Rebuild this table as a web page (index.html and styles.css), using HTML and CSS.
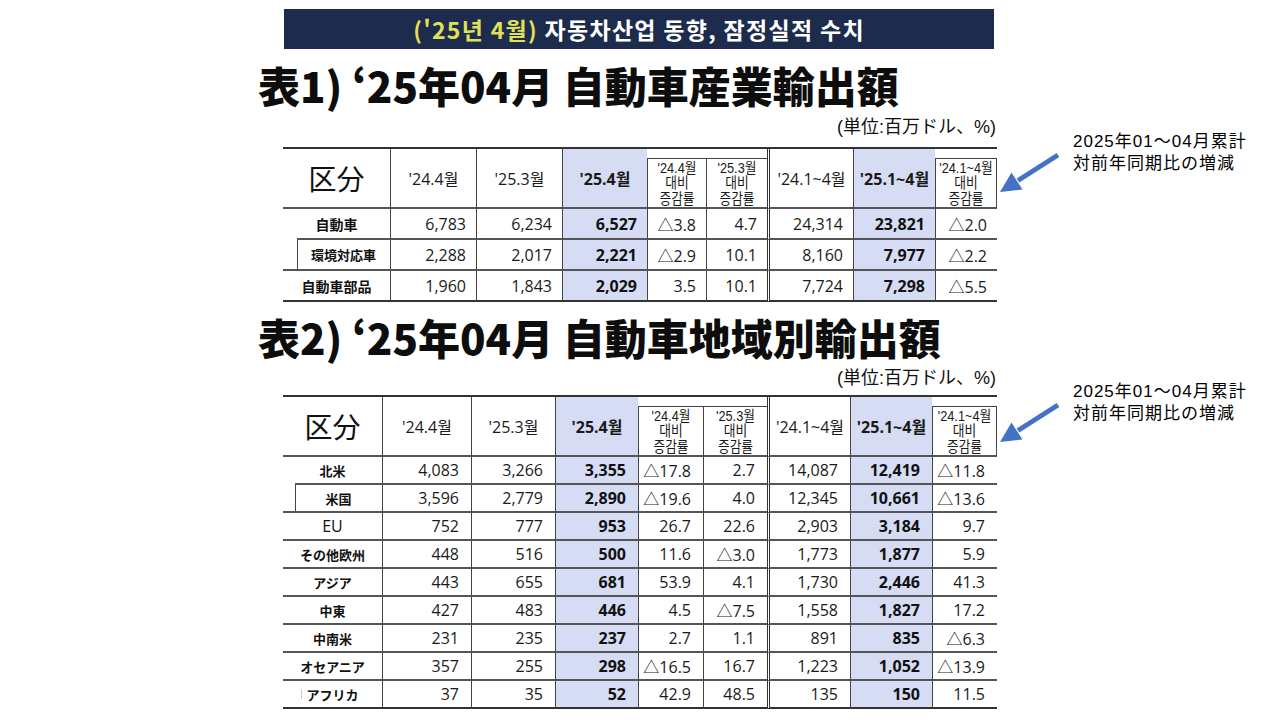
FILE: index.html
```html
<!DOCTYPE html>
<html lang="ja">
<head>
<meta charset="utf-8">
<title>'25年04月 自動車輸出額</title>
<link rel="stylesheet" href="styles.css">
</head>
<body>
<div class="page">
  <main class="main">
    <div class="banner"><span class="yl">('25년 4월)</span>&nbsp;자동차산업 동향, 잠정실적 수치</div>

    <section class="sec sec1">
      <h2 class="title">表1) ‘25年04月 自動車産業輸出額</h2>
      <p class="unit">(単位:百万ドル、%)</p>
      <table class="tbl t1">
        <colgroup><col><col><col><col><col><col><col><col><col></colgroup>
        <thead>
          <tr class="hr1">
            <th rowspan="2" class="c0 kubun">区分</th>
            <th rowspan="2">'24.4월</th>
            <th rowspan="2">'25.3월</th>
            <th rowspan="2" class="hl">'25.4월</th>
            <th colspan="2" class="grp"></th>
            <th rowspan="2" class="dbl">'24.1~4월</th>
            <th rowspan="2" class="hl">'25.1~4월</th>
            <th class="grp"></th>
          </tr>
          <tr class="hr2">
            <th class="sub"><div class="stack"><span class="ln">'24.4월</span><span class="ln">대비</span><span class="ln">증감률</span></div></th>
            <th class="sub"><div class="stack"><span class="ln">'25.3월</span><span class="ln">대비</span><span class="ln">증감률</span></div></th>
            <th class="sub lastsub"><div class="stack"><span class="ln">'24.1~4월</span><span class="ln">대비</span><span class="ln">증감률</span></div></th>
          </tr>
        </thead>
        <tbody>
          <tr>
            <td class="c0 lbl above-indent">自動車</td>
            <td>6,783</td><td>6,234</td><td class="hl">6,527</td><td>△3.8</td><td>4.7</td>
            <td class="dbl">24,314</td><td class="hl">23,821</td><td>△2.0</td>
          </tr>
          <tr>
            <td class="c0 lbl indent small">環境対応車</td>
            <td>2,288</td><td>2,017</td><td class="hl">2,221</td><td>△2.9</td><td>10.1</td>
            <td class="dbl">8,160</td><td class="hl">7,977</td><td>△2.2</td>
          </tr>
          <tr class="last">
            <td class="c0 lbl">自動車部品</td>
            <td>1,960</td><td>1,843</td><td class="hl">2,029</td><td>3.5</td><td>10.1</td>
            <td class="dbl">7,724</td><td class="hl">7,298</td><td>△5.5</td>
          </tr>
        </tbody>
      </table>
      <aside class="note">
        <svg class="arrow" viewBox="0 0 64 44" width="64" height="44" aria-hidden="true">
          <line x1="60" y1="4" x2="20" y2="29.5" stroke="#4472c4" stroke-width="5"/>
          <polygon points="2,41 24.5,38.6 13.5,21.6" fill="#4472c4"/>
        </svg>
        <div class="note-text">2025年01～04月累計<br>対前年同期比の増減</div>
      </aside>
    </section>

    <section class="sec sec2">
      <h2 class="title">表2) ‘25年04月 自動車地域別輸出額</h2>
      <p class="unit">(単位:百万ドル、%)</p>
      <table class="tbl t2">
        <colgroup><col><col><col><col><col><col><col><col><col></colgroup>
        <thead>
          <tr class="hr1">
            <th rowspan="2" class="c0 kubun">区分</th>
            <th rowspan="2">'24.4월</th>
            <th rowspan="2">'25.3월</th>
            <th rowspan="2" class="hl">'25.4월</th>
            <th colspan="2" class="grp"></th>
            <th rowspan="2" class="dbl">'24.1~4월</th>
            <th rowspan="2" class="hl">'25.1~4월</th>
            <th class="grp"></th>
          </tr>
          <tr class="hr2">
            <th class="sub"><div class="stack"><span class="ln">'24.4월</span><span class="ln">대비</span><span class="ln">증감률</span></div></th>
            <th class="sub"><div class="stack"><span class="ln">'25.3월</span><span class="ln">대비</span><span class="ln">증감률</span></div></th>
            <th class="sub lastsub"><div class="stack"><span class="ln">'24.1~4월</span><span class="ln">대비</span><span class="ln">증감률</span></div></th>
          </tr>
        </thead>
        <tbody>
          <tr>
            <td class="c0 lbl above-indent">北米</td>
            <td>4,083</td><td>3,266</td><td class="hl">3,355</td><td>△17.8</td><td>2.7</td>
            <td class="dbl">14,087</td><td class="hl">12,419</td><td>△11.8</td>
          </tr>
          <tr>
            <td class="c0 lbl indent">米国</td>
            <td>3,596</td><td>2,779</td><td class="hl">2,890</td><td>△19.6</td><td>4.0</td>
            <td class="dbl">12,345</td><td class="hl">10,661</td><td>△13.6</td>
          </tr>
          <tr>
            <td class="c0 lbl latin">EU</td>
            <td>752</td><td>777</td><td class="hl">953</td><td>26.7</td><td>22.6</td>
            <td class="dbl">2,903</td><td class="hl">3,184</td><td>9.7</td>
          </tr>
          <tr>
            <td class="c0 lbl">その他欧州</td>
            <td>448</td><td>516</td><td class="hl">500</td><td>11.6</td><td>△3.0</td>
            <td class="dbl">1,773</td><td class="hl">1,877</td><td>5.9</td>
          </tr>
          <tr>
            <td class="c0 lbl">アジア</td>
            <td>443</td><td>655</td><td class="hl">681</td><td>53.9</td><td>4.1</td>
            <td class="dbl">1,730</td><td class="hl">2,446</td><td>41.3</td>
          </tr>
          <tr>
            <td class="c0 lbl">中東</td>
            <td>427</td><td>483</td><td class="hl">446</td><td>4.5</td><td>△7.5</td>
            <td class="dbl">1,558</td><td class="hl">1,827</td><td>17.2</td>
          </tr>
          <tr>
            <td class="c0 lbl">中南米</td>
            <td>231</td><td>235</td><td class="hl">237</td><td>2.7</td><td>1.1</td>
            <td class="dbl">891</td><td class="hl">835</td><td>△6.3</td>
          </tr>
          <tr>
            <td class="c0 lbl">オセアニア</td>
            <td>357</td><td>255</td><td class="hl">298</td><td>△16.5</td><td>16.7</td>
            <td class="dbl">1,223</td><td class="hl">1,052</td><td>△13.9</td>
          </tr>
          <tr class="last">
            <td class="c0 lbl tick">アフリカ</td>
            <td>37</td><td>35</td><td class="hl">52</td><td>42.9</td><td>48.5</td>
            <td class="dbl">135</td><td class="hl">150</td><td>11.5</td>
          </tr>
        </tbody>
      </table>
      <aside class="note">
        <svg class="arrow" viewBox="0 0 64 44" width="64" height="44" aria-hidden="true">
          <line x1="60" y1="4" x2="20" y2="29.5" stroke="#4472c4" stroke-width="5"/>
          <polygon points="2,41 24.5,38.6 13.5,21.6" fill="#4472c4"/>
        </svg>
        <div class="note-text">2025年01～04月累計<br>対前年同期比の増減</div>
      </aside>
    </section>
  </main>
</div>
</body>
</html>
```

FILE: styles.css
```css
* { box-sizing: border-box; }

html, body {
  margin: 0;
  padding: 0;
  background: #ffffff;
}

body {
  font-family: "Noto Sans CJK JP", "Noto Sans CJK KR", sans-serif;
  color: #111111;
}

.page {
  width: 1280px;
  height: 720px;
  overflow: hidden;
}

.main {
  margin-left: 258px;
  padding-top: 9px;
}

/* ---------- banner ---------- */
.banner {
  margin-left: 26px;
  width: 710px;
  height: 40px;
  background: #1d2b4c;
  display: flex;
  align-items: center;
  justify-content: center;
  font-family: "Noto Sans CJK KR", sans-serif;
  font-weight: 700;
  font-size: 23px;
  letter-spacing: 1.3px;
  color: #ffffff;
}

.banner .yl { color: #e0e05a; }

/* ---------- sections ---------- */
.sec {
  display: grid;
  grid-template-columns: 740px 282px;
}

.title {
  grid-column: 1;
  grid-row: 1;
  margin: 14px 0 0;
  font-family: "Noto Sans CJK JP", sans-serif;
  font-size: 42px;
  line-height: 44px;
  font-weight: 900;
  color: #0d0d0d;
  white-space: nowrap;
}

.sec2 .title { margin-top: 13px; }

.unit {
  grid-column: 1;
  grid-row: 2;
  margin: 10px 0 0;
  padding-right: 2px;
  text-align: right;
  font-family: "Liberation Sans", "Noto Sans CJK JP", sans-serif;
  font-size: 18px;
  line-height: 20px;
  font-weight: 400;
  color: #111;
}

.sec2 .unit { margin-top: 9px; }

/* ---------- note ---------- */
.note {
  grid-column: 2;
  grid-row: 2 / span 2;
  align-self: start;
  margin-top: 24px;
  display: flex;
  align-items: flex-start;
}

.sec2 .note { margin-top: 22px; }

.arrow {
  flex: none;
  margin-top: 20px;
}

.note-text {
  margin-left: 11px;
  font-family: "Liberation Sans", "Noto Sans CJK JP", sans-serif;
  font-size: 17px;
  line-height: 22px;
  letter-spacing: 1px;
  color: #000;
  white-space: nowrap;
}

/* ---------- tables ---------- */
.tbl {
  grid-column: 1;
  grid-row: 3;
  margin: 10px 0 0 25px;
  width: 714px;
  table-layout: fixed;
  border-collapse: separate;
  border-spacing: 0;
  border-top: 2px solid #333;
  font-family: "Open Sans", "Noto Sans CJK KR", sans-serif;
  font-size: 16px;
  color: #1a1a1a;
}

.sec2 .tbl { margin-top: 7px; }

.t1 col:nth-child(1) { width: 107px; }
.t1 col:nth-child(2) { width: 86px; }
.t1 col:nth-child(3) { width: 86px; }
.t1 col:nth-child(4) { width: 85px; }
.t1 col:nth-child(5) { width: 59px; }
.t1 col:nth-child(6) { width: 61px; }
.t1 col:nth-child(7) { width: 86px; }
.t1 col:nth-child(8) { width: 82px; }
.t1 col:nth-child(9) { width: 62px; }

.t2 col:nth-child(1) { width: 99px; }
.t2 col:nth-child(2) { width: 89px; }
.t2 col:nth-child(3) { width: 84px; }
.t2 col:nth-child(4) { width: 83px; }
.t2 col:nth-child(5) { width: 65px; }
.t2 col:nth-child(6) { width: 64px; }
.t2 col:nth-child(7) { width: 83px; }
.t2 col:nth-child(8) { width: 82px; }
.t2 col:nth-child(9) { width: 65px; }

.tbl th,
.tbl td {
  padding: 0;
  border-left: 1px solid #444;
  border-bottom: 2px solid #555;
  white-space: nowrap;
}

.tbl .c0 { border-left: none; }

.tbl th {
  font-weight: 400;
  font-size: 16px;
  text-align: center;
  vertical-align: middle;
}

.tbl th.hl { font-weight: 700; }

.hl { background: #d6dcf4; }

.tbl td.hl { font-weight: 700; color: #111; }

.tbl .dbl { border-left: 3px double #333; }

/* header rows */
.hr1 th { height: 10px; }

.hr1 th.grp {
  border-left: none;
  border-bottom: 1px solid #444;
}

.hr2 th { height: 50px; }

.stack {
  display: flex;
  flex-direction: column;
  align-items: center;
  transform: scaleX(0.85);
  transform-origin: center;
}

.ln {
  display: block;
  height: 15.5px;
  font-family: "Liberation Sans", "Noto Sans CJK KR", sans-serif;
  font-size: 15px;
  line-height: 15.5px;
}

.lastsub { border-right: 1px solid #444; }

.tbl th.kubun {
  font-family: "Noto Sans CJK JP", sans-serif;
  font-size: 28px;
  font-weight: 400;
  color: #111;
}

/* body rows */
.t1 td { height: 31px; }
.t2 td { height: 28px; }

.tbl td {
  text-align: right;
  padding-right: 10px;
  vertical-align: middle;
}

.t2 td { padding-right: 12px; }

.tbl tr.last td { border-bottom: 2px solid #333; }

.tbl td.lbl {
  text-align: center;
  padding: 0;
  font-family: "Noto Sans CJK JP", sans-serif;
  font-weight: 700;
  font-size: 14px;
  color: #111;
}

.t2 td.lbl { font-size: 13px; }

.tbl td.lbl.small { font-size: 13px; }

.tbl td.lbl.latin {
  font-family: "Open Sans", sans-serif;
  font-weight: 400;
  font-size: 16px;
}

.tbl td.above-indent {
  border-bottom-color: transparent;
  background: linear-gradient(#555, #555) no-repeat;
  background-origin: border-box;
  background-position: 14px 100%;
  background-size: calc(100% - 14px) 2px;
}

.t2 td.above-indent {
  background-position: 12px 100%;
  background-size: calc(100% - 12px) 2px;
}

.tbl td.indent {
  padding-left: 14px;
  background: linear-gradient(#444, #444) no-repeat;
  background-position: 14px 0;
  background-size: 1px 100%;
}

.t2 td.indent {
  padding-left: 12px;
  background-position: 12px 0;
}

.tbl td.tick {
  background: linear-gradient(#c8c8c8, #c8c8c8) no-repeat;
  background-position: 18px 50%;
  background-size: 1px 10px;
}
```
